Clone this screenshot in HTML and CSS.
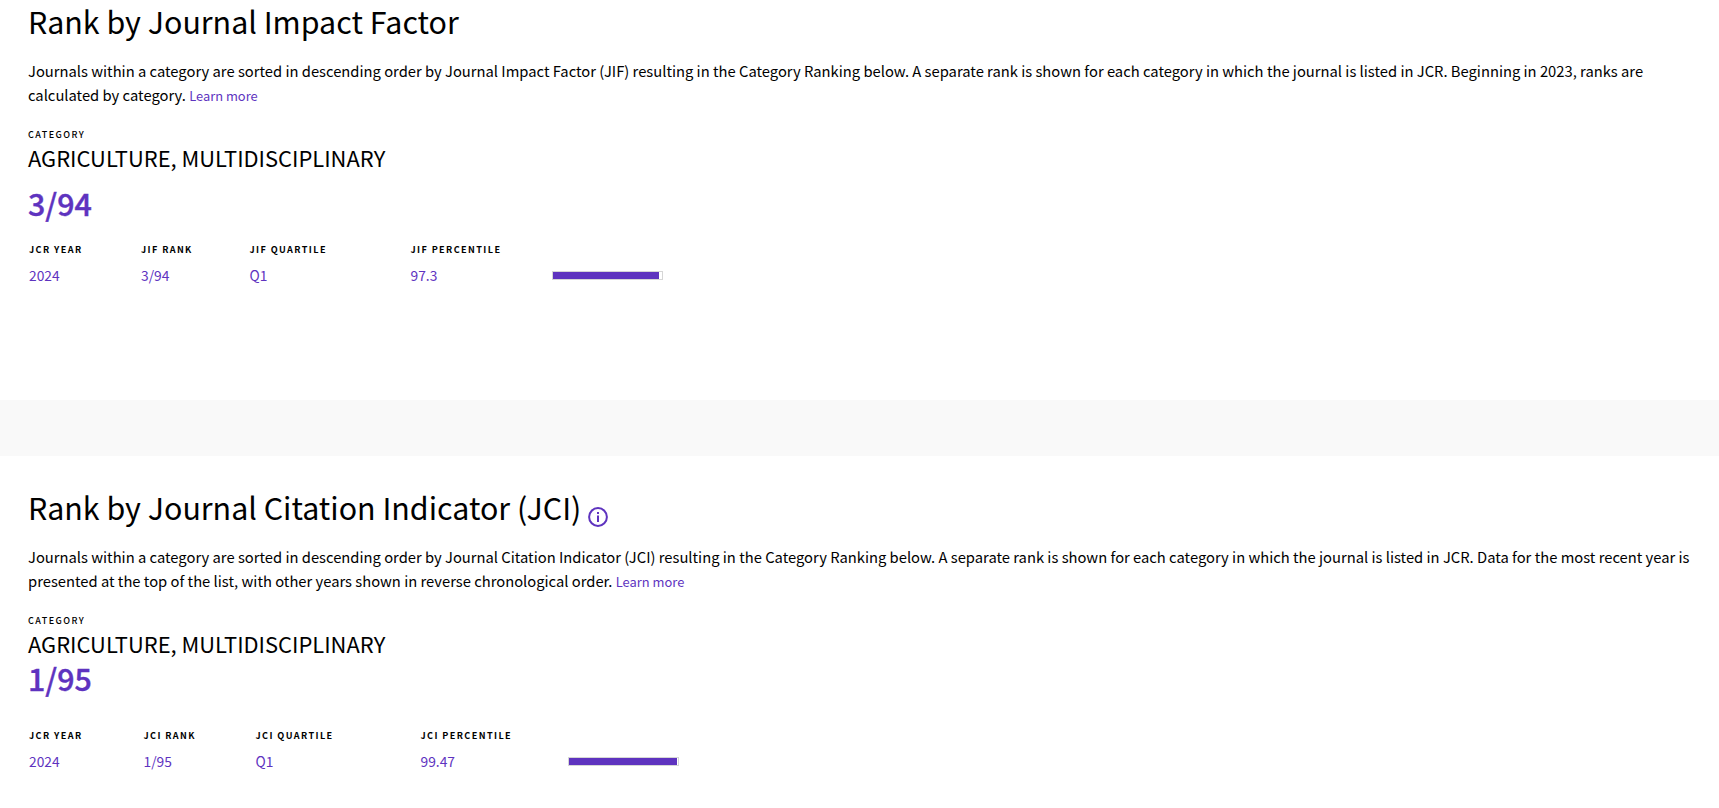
FILE: index.html
```html
<!DOCTYPE html>
<html lang="en">
<head>
<meta charset="utf-8">
<title>Rank</title>
<link rel="stylesheet" href="styles.css">
</head>
<body>
<section class="sec sec-jif">
  <h2 class="title">Rank by Journal Impact Factor</h2>
  <p class="desc">Journals within a category are sorted in descending order by Journal Impact Factor (JIF) resulting in the Category Ranking below. A separate rank is shown for each category in which the journal is listed in JCR. Beginning in 2023, ranks are calculated by category. <a class="learn">Learn more</a></p>
  <div class="cat-label">CATEGORY</div>
  <div class="cat-name">AGRICULTURE, MULTIDISCIPLINARY</div>
  <div class="big big-jif">3/94</div>
  <div class="table t-jif">
    <div class="th">JCR YEAR</div><div class="th">JIF RANK</div><div class="th">JIF QUARTILE</div><div class="th">JIF PERCENTILE</div><div></div>
    <div class="td">2024</div><div class="td">3/94</div><div class="td">Q1</div><div class="td">97.3</div>
    <div class="bar"><div class="fill" style="width:97.3%"></div></div>
  </div>
</section>
<div class="band"></div>
<section class="sec sec-jci">
  <h2 class="title">Rank by Journal Citation Indicator (JCI) <svg class="info" viewBox="0 0 20 20" width="20" height="20"><circle cx="10" cy="10" r="8.9" fill="none" stroke="#5e33bf" stroke-width="2"/><rect x="9" y="8.5" width="2" height="6.5" fill="#5e33bf"/><rect x="9" y="5" width="2" height="2" fill="#5e33bf"/></svg></h2>
  <p class="desc">Journals within a category are sorted in descending order by Journal Citation Indicator (JCI) resulting in the Category Ranking below. A separate rank is shown for each category in which the journal is listed in JCR. Data for the most recent year is presented at the top of the list, with other years shown in reverse chronological order. <a class="learn">Learn more</a></p>
  <div class="cat-label">CATEGORY</div>
  <div class="cat-name">AGRICULTURE, MULTIDISCIPLINARY</div>
  <div class="big big-jci">1/95</div>
  <div class="table t-jci">
    <div class="th">JCR YEAR</div><div class="th">JCI RANK</div><div class="th">JCI QUARTILE</div><div class="th">JCI PERCENTILE</div><div></div>
    <div class="td">2024</div><div class="td">1/95</div><div class="td">Q1</div><div class="td">99.47</div>
    <div class="bar"><div class="fill" style="width:99.47%"></div></div>
  </div>
</section>
</body>
</html>
```
FILE: styles.css
```css
* { box-sizing: border-box; }
html, body { margin: 0; padding: 0; background: #fff; overflow: hidden; }
body { font-family: "Noto Sans CJK JP", "Noto Sans", sans-serif; color: #000; width: 1719px; height: 808px; }
.sec { padding-left: 28px; }
.sec-jif { height: 400px; }
.sec-jci { height: 352px; padding-top: 30px; }
.band { height: 56px; background: #f9f9f9; }
.title { margin: 0; font-weight: 400; font-size: 30.4px; line-height: 42px; }
.info { vertical-align: -7px; margin-left: 0; }
.desc { margin: 17px 0 0; font-size: 14.75px; line-height: 24px; width: 1680px; }
.learn { font-size: 12.9px; color: #5e33bf; }
.cat-label { margin-top: 20px; font-size: 9px; font-weight: 500; letter-spacing: 1.45px; line-height: 14px; }
.cat-name { font-size: 21.9px; line-height: 32px; }
.big { font-weight: 500; font-size: 30.4px; color: #5e33bf; line-height: 44px; -webkit-text-stroke: 0.4px #5e33bf; }
.big-jif { margin-top: 7px; }
.big-jci { margin-top: -4px; }
.table { display: grid; align-items: center; margin-left: 1px; }
.t-jif { grid-template-columns: 112px 108.5px 161px 141.5px 111px; margin-top: 17px; }
.t-jci { grid-template-columns: 114.5px 112px 165px 147.5px 111px; margin-top: 28px; }
.th { font-size: 9.1px; font-weight: 700; letter-spacing: 1.4px; line-height: 14px; padding-bottom: 7px; }
.td { font-size: 13.8px; line-height: 24px; color: #5e33bf; }
.bar { width: 111px; height: 9px; margin-top: 1px; border: 1px solid #d6d6d6; background: #fff; }
.fill { height: 100%; background: #5e33bf; }
```
